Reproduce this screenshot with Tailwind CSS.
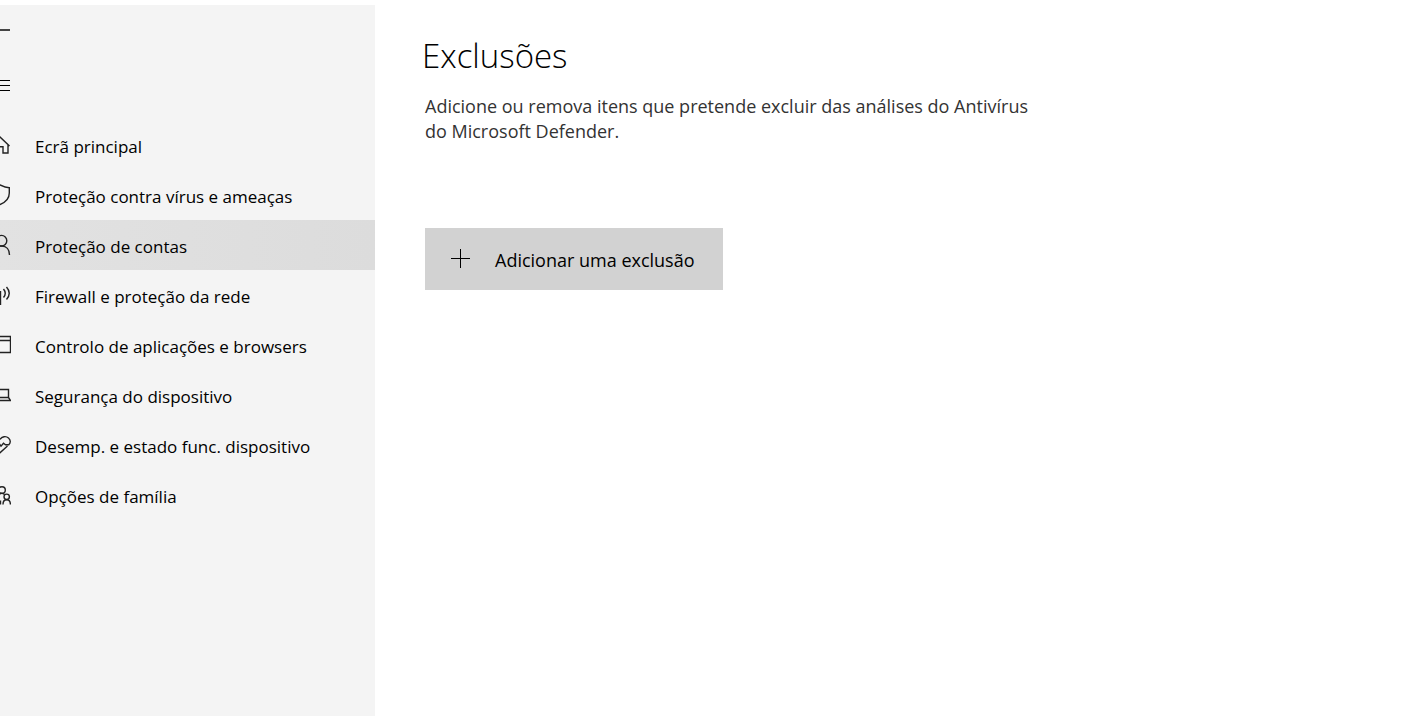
<!DOCTYPE html>
<html lang="pt">
<head>
    <meta charset="UTF-8">
    <meta name="viewport" content="width=device-width, initial-scale=1.0">
    <title>Exclusões</title>
    <script src="https://cdn.jsdelivr.net/npm/@tailwindcss/browser@4"></script>
</head>
<body class="bg-white font-['Open_Sans','Noto_Sans',sans-serif] text-black">
  <div class="flex min-h-screen overflow-hidden pt-[5px]">
    <aside class="w-[375px] shrink-0 bg-[#f4f4f4]">
      <div class="flex flex-col">
        <button type="button" aria-label="Voltar" class="-ml-[11px] flex h-[50px] w-12 items-center">
          <svg class="size-[22px]" viewBox="0 0 22 22" fill="none" stroke="#444" stroke-width="2"><path d="M1 11H21M9 3L1 11L9 19"/></svg>
        </button>
        <button type="button" aria-label="Menu" class="-ml-[11px] flex h-[60px] w-12 items-center">
          <svg class="size-[22px]" viewBox="0 0 22 22" fill="none" stroke="currentColor"><path d="M1 6.500H21M1 11.500H21M1 16.500H21"/></svg>
        </button>
      </div>
      <nav class="mt-[5px] text-[17px]">
        <a href="#" class="flex h-[50px] items-center gap-6">
          <svg class="-ml-[11px] size-[22px] shrink-0" viewBox="0 0 22 22" fill="none" stroke="#222" stroke-width="1.400"><path d="M1.500 12L11 3L20.500 12M3 10.500V19H8V12.700H14V19H19V10.500"/></svg>
          <span class="pt-[3px]">Ecrã principal</span>
        </a>
        <a href="#" class="flex h-[50px] items-center gap-6">
          <svg class="-ml-[11px] size-[22px] shrink-0" viewBox="0 0 22 22" fill="none" stroke="#222" stroke-width="1.400"><path d="M11 1C14 2.500 17 3.700 20.300 3.700V9C20.300 14.500 16 18.500 11 20.500C6 18.500 1.700 14.500 1.700 9V3.700C5 3.700 8 2.500 11 1Z"/></svg>
          <span class="pt-[3px]">Proteção contra vírus e ameaças</span>
        </a>
        <a href="#" class="flex h-[50px] items-center gap-6 bg-linear-to-r from-[#e2e2e2] to-[#dcdcdc]">
          <svg class="-ml-[11px] size-[22px] shrink-0" viewBox="0 0 22 22" fill="none" stroke="#222" stroke-width="1.400"><circle cx="12.500" cy="6.700" r="5.300"/><path d="M4 21C4 15.500 7.500 12 12.500 12S20.500 15.500 20.500 21"/></svg>
          <span class="pt-[3px]">Proteção de contas</span>
        </a>
        <a href="#" class="flex h-[50px] items-center gap-6">
          <svg class="-ml-[11px] size-[22px] shrink-0" viewBox="0 0 22 22" fill="none" stroke="#222" stroke-width="1.400"><path d="M11.500 7V21M14.500 5Q18 9.200 14.500 13.500M17.500 3Q23 9.200 17.500 15.500M8 5Q4.500 9.200 8 13.500M5 3Q-.500 9.200 5 15.500"/></svg>
          <span class="pt-[3px]">Firewall e proteção da rede</span>
        </a>
        <a href="#" class="flex h-[50px] items-center gap-6">
          <svg class="-ml-[11px] size-[22px] shrink-0" viewBox="0 0 22 22" fill="none" stroke="#222" stroke-width="1.400"><path d="M.500 2.500H21.500V18.500H.500ZM.500 6.500H21.500"/></svg>
          <span class="pt-[3px]">Controlo de aplicações e browsers</span>
        </a>
        <a href="#" class="flex h-[50px] items-center gap-6">
          <svg class="-ml-[11px] size-[22px] shrink-0" viewBox="0 0 22 22" fill="none" stroke="#222" stroke-width="1.400"><path d="M2.500 13.500V5.500H19.500V13.500ZM2.500 13.500L.500 16.500H21.500L19.500 13.500"/></svg>
          <span class="pt-[3px]">Segurança do dispositivo</span>
        </a>
        <a href="#" class="flex h-[50px] items-center gap-6">
          <svg class="-ml-[11px] size-[22px] shrink-0" viewBox="0 0 22 22" fill="none" stroke="#222" stroke-width="1.400"><path d="M11 5.500C13 2.300 17 1.800 19.500 4C22 6.300 21.600 9 19.800 10.700H16.500L14.500 9.300L12 12.200L9 8L6.500 10.700H2.200C.400 9 0 6.300 2.500 4C5 1.800 9 2.300 11 5.500M4 12.500L11 18.700L18.500 12"/></svg>
          <span class="pt-[3px]">Desemp. e estado func. dispositivo</span>
        </a>
        <a href="#" class="flex h-[50px] items-center gap-6">
          <svg class="-ml-[11px] size-[22px] shrink-0" viewBox="0 0 22 22" fill="none" stroke="#222" stroke-width="1.400"><circle cx="13" cy="6" r="3.300"/><circle cx="17.700" cy="12.800" r="2.700"/><path d="M8.500 12C10 9.200 13.500 8.500 15.500 10.500M11.500 16.500V20.500M14 20.500C14 14.200 21.400 14.200 21.400 20.500"/></svg>
          <span class="pt-[3px]">Opções de família</span>
        </a>
      </nav>
    </aside>
    <main class="flex-1 pl-[50px] pt-[25px]">
      <h1 class="-ml-[3px] text-[33px] font-light leading-[52px]">Exclusões</h1>
      <p class="mt-3 max-w-[620px] text-[18px] leading-[25px] text-[#333]">Adicione ou remova itens que pretende excluir das análises do Antivírus do Microsoft Defender.</p>
      <button type="button" class="mt-[84px] flex h-[62px] items-center gap-6 bg-[#d2d2d2] pl-[25px] pr-7 text-[18px]">
        <svg class="size-[21px]" viewBox="0 0 21 21" fill="none" stroke="currentColor"><path d="M1 9.500H20M10.500 0V19"/></svg>
        <span class="pt-0.5">Adicionar uma exclusão</span>
      </button>
    </main>
  </div>
</body>
</html>
